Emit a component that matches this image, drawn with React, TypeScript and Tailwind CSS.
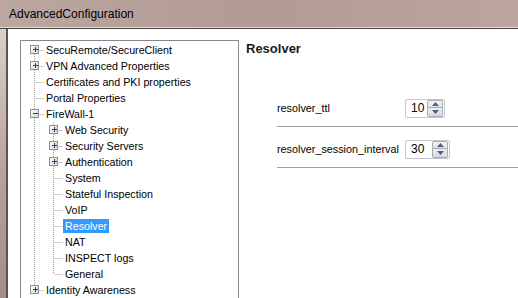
import React from 'react';

type Node = {
  label: string;
  level: 0 | 1;
  expander?: '+' | '-';
  selected?: boolean;
  // vertical connector segments for this row
  v0?: 'full' | 'top' | 'bottom';
  v1?: 'full' | 'top';
};

const nodes: Node[] = [
  { label: 'SecuRemote/SecureClient', level: 0, expander: '+', v0: 'bottom' },
  { label: 'VPN Advanced Properties', level: 0, expander: '+', v0: 'full' },
  { label: 'Certificates and PKI properties', level: 0, v0: 'full' },
  { label: 'Portal Properties', level: 0, v0: 'full' },
  { label: 'FireWall-1', level: 0, expander: '-', v0: 'full' },
  { label: 'Web Security', level: 1, expander: '+', v0: 'full', v1: 'full' },
  { label: 'Security Servers', level: 1, expander: '+', v0: 'full', v1: 'full' },
  { label: 'Authentication', level: 1, expander: '+', v0: 'full', v1: 'full' },
  { label: 'System', level: 1, v0: 'full', v1: 'full' },
  { label: 'Stateful Inspection', level: 1, v0: 'full', v1: 'full' },
  { label: 'VoIP', level: 1, v0: 'full', v1: 'full' },
  { label: 'Resolver', level: 1, v0: 'full', v1: 'full', selected: true },
  { label: 'NAT', level: 1, v0: 'full', v1: 'full' },
  { label: 'INSPECT logs', level: 1, v0: 'full', v1: 'full' },
  { label: 'General', level: 1, v0: 'full', v1: 'top' },
  { label: 'Identity Awareness', level: 0, expander: '+', v0: 'top' },
];

const DOT = '#a0a0a0';

const Expander: React.FC<{ cx: number; sign: '+' | '-' }> = ({ cx, sign }) => (
  <g>
    <rect x={cx - 3.5} y={3.5} width={8} height={8} fill="url(#expFill)" stroke="#919191" />
    <line x1={cx - 1} y1={7.5} x2={cx + 4} y2={7.5} stroke="#1e3f7a" />
    {sign === '+' && <line x1={cx + 1.5} y1={5} x2={cx + 1.5} y2={10} stroke="#1e3f7a" />}
  </g>
);

const TreeRow: React.FC<{ node: Node }> = ({ node }) => {
  const w = node.level === 0 ? 23 : 42;
  const vx0 = 13.5;
  const vx1 = 32.5;
  const seg = (x: number, kind?: 'full' | 'top' | 'bottom') => {
    if (!kind) return null;
    const y1 = kind === 'bottom' ? 8 : 0;
    const y2 = kind === 'top' ? 8 : 16;
    return <line x1={x} y1={y1} x2={x} y2={y2} stroke={DOT} strokeDasharray="1 1" />;
  };
  const hx = node.level === 0 ? vx0 : vx1;
  return (
    <div className="flex h-[16px] items-center">
      <svg width={w} height={16} className="shrink-0">
        <defs>
          <linearGradient id="expFill" x1="0" y1="0" x2="1" y2="1">
            <stop offset="0" stopColor="#ffffff" />
            <stop offset="1" stopColor="#d4d4d4" />
          </linearGradient>
        </defs>
        {seg(vx0, node.v0)}
        {node.level === 1 && seg(vx1, node.v1)}
        <line
          x1={node.expander ? hx + 5 : hx + 1}
          y1={8.5}
          x2={w}
          y2={8.5}
          stroke={DOT}
          strokeDasharray="1 1"
        />
        {node.expander && <Expander cx={hx - 0.5} sign={node.expander} />}
      </svg>
      <span
        className={`px-[2px] h-[14px] leading-[14px] whitespace-nowrap ${
          node.selected ? 'bg-[#3399ff] text-white' : 'text-[#000]'
        }`}
      >
        {node.label}
      </span>
    </div>
  );
};

const SpinBox: React.FC<{ value: string; width: string }> = ({ value, width }) => (
  <div className={`flex h-[19px] items-center border border-[#c3c6cc] rounded-[2px] bg-white ${width}`}>
    <span className="flex-1 pl-[5px] text-[12px] leading-none text-black">{value}</span>
    <div className="mr-[1px] flex h-[17px] w-[16px] flex-col">
      <div className="flex h-1/2 items-center justify-center border border-[#a5acb5] rounded-t-[2px] bg-gradient-to-b from-[#f4f5f7] to-[#dfe3e8]">
        <svg width="7" height="4"><path d="M0 4 L3.5 0 L7 4 Z" fill="#4d6185" /></svg>
      </div>
      <div className="flex h-1/2 items-center justify-center border border-t-0 border-[#a5acb5] rounded-b-[2px] bg-gradient-to-b from-[#eceef1] to-[#d6dbe1]">
        <svg width="7" height="4"><path d="M0 0 L7 0 L3.5 4 Z" fill="#4d6185" /></svg>
      </div>
    </div>
  </div>
);

const ParamRow: React.FC<{ label: string; value: string; width: string }> = ({ label, value, width }) => (
  <div className="border-b border-[#a0a0a0]">
    <div className="flex h-[40px] items-center pt-[4px]">
      <span className="w-[128px] shrink-0 text-[10.8px] text-black">{label}</span>
      <SpinBox value={value} width={width} />
    </div>
  </div>
);

export default function App() {
  return (
    <div className="h-[298px] w-[518px] overflow-hidden bg-white font-['Liberation_Sans',Arial,sans-serif]">
      <div className="flex h-[27px] items-center bg-gradient-to-r from-[#bba6a0] via-[#b39b95] to-[#bca59f] pl-[9px] text-[12px] text-black">
        AdvancedConfiguration
      </div>
      <div className="h-[1px] bg-[#e6dad6]" />
      <div className="h-[1px] bg-[#4a4141]" />
      <div className="flex h-[300px]">
        <div className="w-[6px] bg-gradient-to-b from-[#d9d0cd] via-[#b7a09b] to-[#a4877f]" />
        <div className="w-[2px] bg-[#5c5454]" />
        <div className="flex flex-1 pl-[12px] pt-[11px]">
          <div className="h-[300px] w-[219px] shrink-0 border border-[#828790] pt-[1px] text-[10.7px]">
            {nodes.map((n) => (
              <TreeRow key={n.label} node={n} />
            ))}
          </div>
          <div className="flex-1 pl-[7px]">
            <div className="h-[17px] text-[13px] font-bold leading-[17px] text-[#1a1a1a]">Resolver</div>
            <div className="pl-[31px] pt-[29px]">
              <ParamRow label="resolver_ttl" value="10" width="w-[40px]" />
              <ParamRow label="resolver_session_interval" value="30" width="w-[45px]" />
            </div>
          </div>
        </div>
      </div>
    </div>
  );
}
